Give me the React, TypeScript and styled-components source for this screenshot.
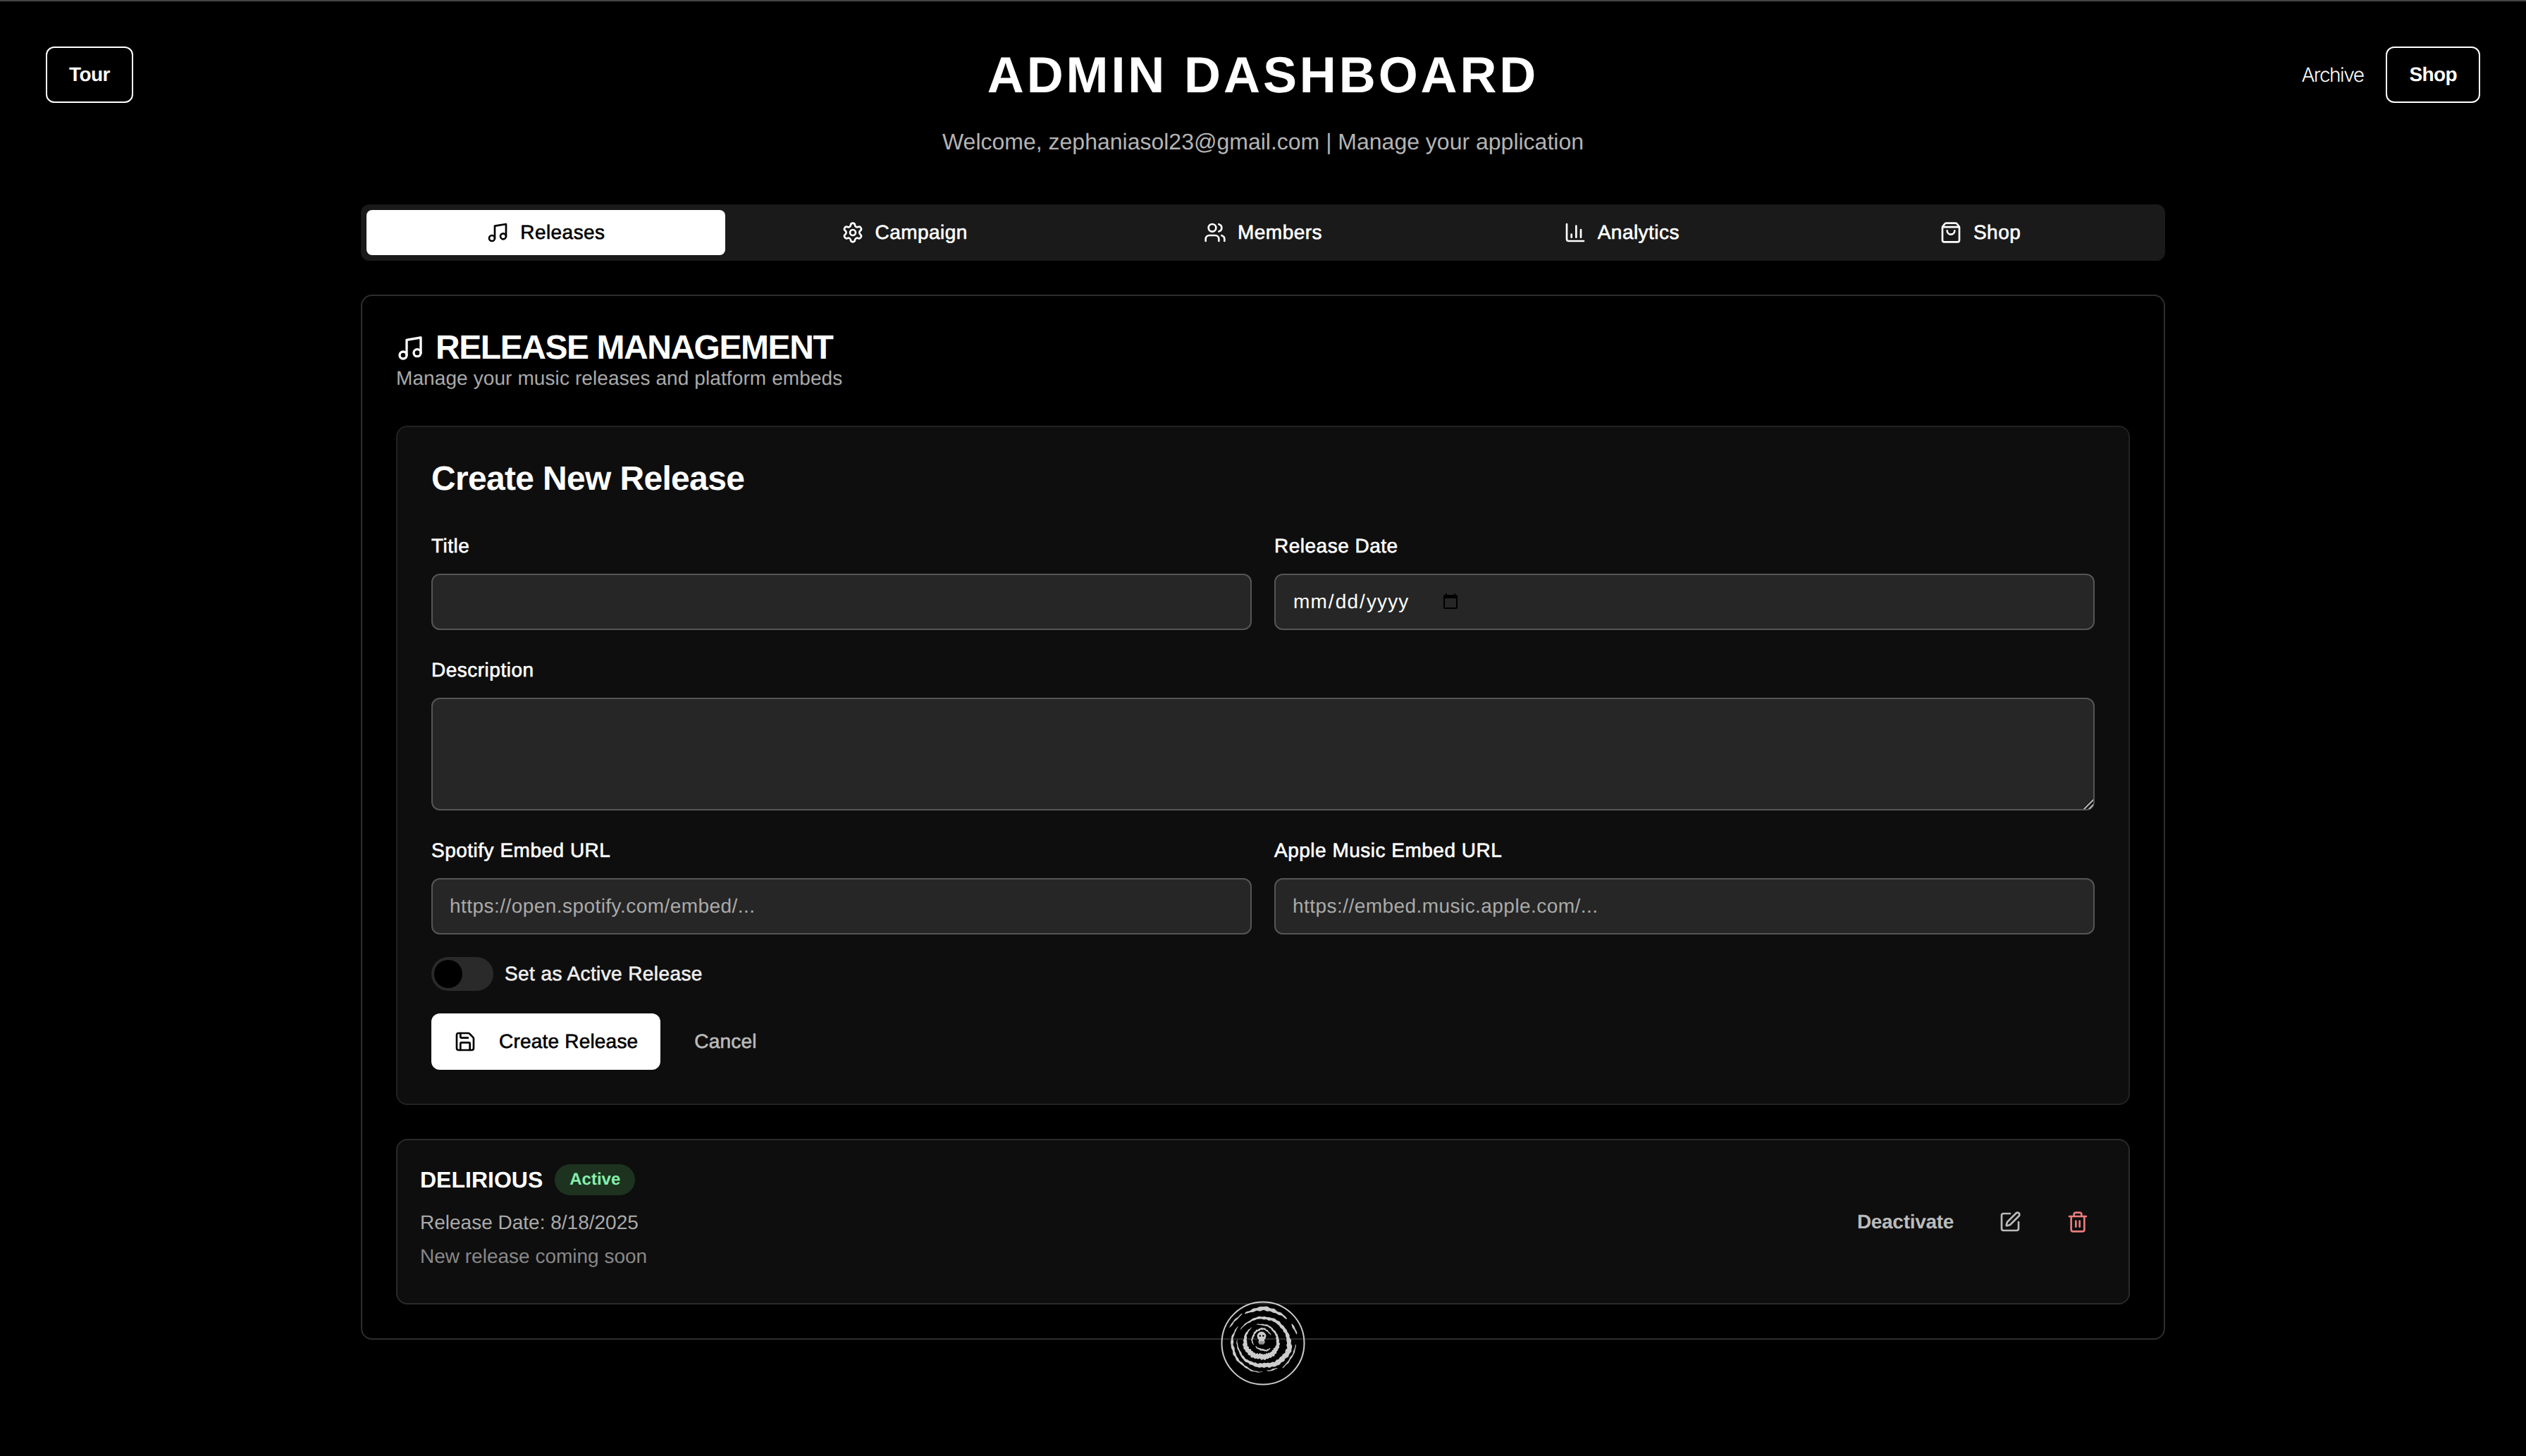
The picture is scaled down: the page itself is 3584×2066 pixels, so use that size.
import React from 'react';
import styled, { createGlobalStyle, css } from 'styled-components';
import { BarChart3, Music, Save, Settings, ShoppingBag, SquarePen, Trash2, Users } from 'lucide-react';

const GlobalStyle = createGlobalStyle`
    html, body {
        margin: 0;
        background: #000;
    }
    * {
        box-sizing: border-box;
    }
    body {
        font-family: "Liberation Sans", Arial, sans-serif;
        color: #fff;
        text-rendering: geometricPrecision;
    }
    button, input, textarea {
        font-family: inherit;
        text-rendering: geometricPrecision;
    }
`;

// Helvetica's medium weight has no Liberation counterpart, so thicken the regular cut.
const medium = css`
    -webkit-text-stroke: 0.6px currentColor;
    letter-spacing: 0.2px;
`;

const Page = styled.div`
    position: relative;
    min-height: 2066px;
    border-top: 2px solid #444;
`;

const TopBar = styled.header`
    display: grid;
    grid-template-columns: 1fr auto 1fr;
    align-items: start;
    padding: 64px 65px 0;
`;

const TopActions = styled.div<{ align: 'start' | 'end' }>`
    display: flex;
    align-items: center;
    gap: 32px;
    justify-content: flex-${({ align }) => align};
`;

const OutlineButton = styled.button`
    height: 80px;
    padding: 0 31px;
    background: #000;
    border: 2px solid #fff;
    border-radius: 12px;
    color: #fff;
    font-size: 28px;
    font-weight: 700;
    letter-spacing: -0.6px;
`;

const ArchiveLink = styled.a`
    font-family: Inter, sans-serif;
    font-size: 28px;
    font-weight: 300;
    letter-spacing: -1.5px;
    color: #fff;
`;

const Heading = styled.div`
    padding-top: 1px;
    text-align: center;
`;

const PageTitle = styled.h1`
    margin: 0;
    font-size: 72px;
    line-height: 80px;
    font-weight: 700;
    letter-spacing: 3.9px;
`;

const Welcome = styled.p`
    margin: 30px 0 0;
    font-size: 32px;
    line-height: 48px;
    color: #b4b4b4;
`;

const Main = styled.main`
    width: 2560px;
    margin: 65px auto 0;
`;

const TabBar = styled.nav`
    display: flex;
    padding: 8px;
    height: 80px;
    background: #1a1a1a;
    border-radius: 12px;
`;

const Tab = styled.button<{ active?: boolean }>`
    flex: 1;
    display: flex;
    align-items: center;
    justify-content: center;
    gap: 16px;
    border: 0;
    border-radius: 8px;
    font-size: 28px;
    ${medium}
    letter-spacing: 0.45px;
    background: ${({ active }) => (active ? '#fff' : 'transparent')};
    color: ${({ active }) => (active ? '#000' : '#fff')};

    svg {
        -webkit-text-stroke: 0;
    }
`;

const Card = styled.section`
    margin-top: 48px;
    padding: 48px;
    border: 2px solid #2e2e2e;
    border-radius: 16px;
`;

const CardTitle = styled.h2`
    display: flex;
    align-items: center;
    gap: 16px;
    margin: 0;
    font-size: 48px;
    line-height: 52px;
    font-weight: 700;
    letter-spacing: -1.45px;
`;

const CardSubtitle = styled.p`
    margin: 0;
    padding-top: 2px;
    font-size: 28px;
    line-height: 30px;
    color: #aaa;
    letter-spacing: 0.1px;
`;

const FormPanel = styled.form`
    margin-top: 52px;
    padding: 48px;
    background: #0e0e0e;
    border: 2px solid #222;
    border-radius: 16px;
`;

const FormTitle = styled.h3`
    margin: 0 0 48px;
    font-size: 48px;
    line-height: 52px;
    font-weight: 700;
    letter-spacing: -0.67px;
`;

const FieldRow = styled.div`
    display: grid;
    grid-template-columns: 1fr 1fr;
    gap: 32px;
    margin-bottom: 36px;
`;

const Field = styled.label`
    display: block;
`;

const FieldBlock = styled(Field)`
    margin-bottom: 36px;
`;

const LabelText = styled.span`
    display: block;
    margin-bottom: 18px;
    font-size: 28px;
    line-height: 42px;
    color: #fff;
    ${medium}
    letter-spacing: 0.5px;
`;

const control = css`
    display: block;
    width: 100%;
    padding: 0 24px;
    background: #262626;
    border: 2px solid #555;
    border-radius: 12px;
    color: #fff;
    font-size: 28px;
    outline: none;

    &::placeholder {
        color: #aaa;
        opacity: 1;
        letter-spacing: 0.45px;
    }
`;

const TextInput = styled.input`
    ${control}
    height: 80px;
`;

const DateInput = styled.input`
    ${control}
    height: 80px;

    &::-webkit-datetime-edit {
        flex: 0 0 auto;
        letter-spacing: 1.1px;
    }
    &::-webkit-calendar-picker-indicator {
        margin-left: 5px;
        width: 26px;
        height: 26px;
        padding: 0;
    }
`;

const TextArea = styled.textarea`
    ${control}
    height: 160px;
    padding: 16px 24px;
    resize: vertical;

    &::-webkit-resizer {
        background: linear-gradient(
            135deg,
            transparent 46%,
            #1c1c1c 46%,
            #1c1c1c 52%,
            #aaa 52%,
            #aaa 62%,
            #1c1c1c 62%,
            #1c1c1c 74%,
            #aaa 74%,
            #aaa 84%,
            transparent 84%
        );
    }
`;

const ToggleRow = styled.div`
    display: flex;
    align-items: center;
    gap: 16px;
    margin-top: -4px;
    font-size: 28px;
    color: #eee;
    ${medium}
    letter-spacing: 0.4px;
`;

const ToggleTrack = styled.button`
    width: 88px;
    height: 48px;
    padding: 4px;
    background: #2a2a2a;
    border: 0;
    border-radius: 24px;
`;

const ToggleThumb = styled.span`
    display: block;
    width: 40px;
    height: 40px;
    background: #000;
    border-radius: 50%;
`;

const FormActions = styled.div`
    display: flex;
    align-items: center;
    gap: 16px;
    margin-top: 32px;
`;

const PrimaryButton = styled.button`
    display: flex;
    align-items: center;
    gap: 32px;
    height: 80px;
    padding: 0 32px;
    background: #fff;
    border: 0;
    border-radius: 12px;
    color: #000;
    font-size: 28px;
    ${medium}

    svg {
        -webkit-text-stroke: 0;
    }
`;

const GhostButton = styled.button`
    height: 80px;
    padding: 0 32px;
    background: transparent;
    border: 0;
    color: #bbb;
    font-size: 28px;
    ${medium}
`;

const ReleaseCard = styled.article`
    display: flex;
    align-items: center;
    justify-content: space-between;
    margin-top: 48px;
    padding: 34px 32px;
    background: #0e0e0e;
    border: 2px solid #2a2a2a;
    border-radius: 16px;
`;

const ReleaseInfo = styled.div`
    padding-bottom: 12px;
`;

const ReleaseHead = styled.div`
    display: flex;
    align-items: center;
    gap: 17px;
    height: 44px;
`;

const ReleaseName = styled.h4`
    margin: 0;
    font-size: 32px;
    font-weight: 700;
`;

const Badge = styled.span`
    padding: 0 21px;
    height: 44px;
    line-height: 44px;
    background: #1d3320;
    border-radius: 22px;
    color: #86efac;
    font-size: 24px;
    font-weight: 700;
`;

const ReleaseMeta = styled.p<{ tone: string; gap: number }>`
    margin: ${({ gap }) => gap}px 0 0;
    font-size: 28px;
    line-height: 40px;
    color: ${({ tone }) => tone};
`;

const ReleaseActions = styled.div`
    display: flex;
    align-items: center;
    gap: 16px;
`;

const ActionButton = styled.button<{ tone: string }>`
    display: flex;
    align-items: center;
    height: 80px;
    padding: 0 24px;
    background: transparent;
    border: 0;
    color: ${({ tone }) => tone};
    font-size: 28px;
    font-weight: 700;
    letter-spacing: -0.3px;
`;

const LogoMark = styled.svg`
    position: fixed;
    left: 50%;
    bottom: 100px;
    width: 120px;
    height: 120px;
    margin-left: -60px;
`;

type Key = [angle: number, radius: number, thickness: number];

// Hand-cut look of the spiral: a polygon following angle/radius keys with a deterministic wobble.
function bandPath(keys: Key[], seed: number): string {
    const outer: string[] = [];
    const inner: string[] = [];
    const steps = 90;
    const first = keys[0][0];
    const last = keys[keys.length - 1][0];
    for (let i = 0; i <= steps; i += 1) {
        const t = i / steps;
        const angle = first + (last - first) * t;
        let k = 0;
        while (k < keys.length - 2 && angle > keys[k + 1][0]) {
            k += 1;
        }
        const [a0, r0, w0] = keys[k];
        const [a1, r1, w1] = keys[k + 1];
        const f = (angle - a0) / (a1 - a0);
        const rad = (angle * Math.PI) / 180;
        const noise = Math.sin(rad * 9 + seed) * 0.5 + Math.sin(rad * 23 + seed * 2) * 0.35;
        const radius = r0 + (r1 - r0) * f + noise * 0.7;
        const taper = Math.pow(Math.sin(Math.PI * t), 0.35);
        const width = (w0 + (w1 - w0) * f) * 1.35 * taper * (1 + Math.sin(rad * 31 + seed) * 0.2);
        const point = (r: number) =>
            `${(60 + r * Math.cos(rad)).toFixed(2)} ${(60 + r * Math.sin(rad)).toFixed(2)}`;
        outer.push(point(radius + width / 2));
        inner.unshift(point(radius - width / 2));
    }
    return `M${outer.join('L')}L${inner.join('L')}Z`;
}

const SPIRAL_BANDS: Key[][] = [
    [[-155, 52, 1.6], [-125, 51, 1.4]],
    [[-122, 49, 2.5], [-90, 49, 4.5], [-45, 48, 2.5]],
    [[-34, 49, 2.2], [-15, 49, 1.6]],
    [[2, 46, 1.5], [52, 44, 1.5]],
    [[60, 41, 1.5], [82, 39, 1.2]],
    [[90, 41, 1.2], [135, 42, 2], [180, 44, 3], [215, 43, 1.5]],
    [[-150, 37, 2], [-90, 36, 3.5], [-20, 36, 3.5], [10, 38, 5.5], [90, 31, 5], [150, 35, 3], [190, 37, 2]],
    [[-110, 28, 2.5], [-30, 22, 2.5], [40, 20, 5], [100, 19, 6], [170, 25, 6], [235, 28, 2]],
    [[170, 14, 1.8], [265, 21, 2], [315, 16, 1.6]],
];

const LOGO_JAW: Key[] = [[33, 13, 1.8], [100, 9, 2], [160, 11, 1.6]];

const Logo: React.FC = () => (
    <LogoMark viewBox="0 0 120 120" role="img" aria-label="Logo">
        <circle cx="60" cy="60" r="58.5" fill="none" stroke="#ccc" strokeWidth="2" />
        {SPIRAL_BANDS.map((keys, index) => (
            <path key={index} d={bandPath(keys, index * 1.7 + 1)} fill="#ccc" />
        ))}
        <path d={bandPath(LOGO_JAW, 4)} fill="#ccc" />
        <circle cx="58" cy="50" r="6.4" fill="#ccc" />
        <circle cx="55.8" cy="49.5" r="1.3" fill="#000" />
        <circle cx="60.4" cy="49.5" r="1.3" fill="#000" />
        <path d="M54.5 54h7l1 4.5-1.5 3h-6l-1.5-3z" fill="#ccc" />
        <path d="M56 57v4M58 57v4M60 57v4" stroke="#000" strokeWidth="0.6" />
    </LogoMark>
);

const TABS = [
    { label: 'Releases', icon: Music, active: true },
    { label: 'Campaign', icon: Settings },
    { label: 'Members', icon: Users },
    { label: 'Analytics', icon: BarChart3 },
    { label: 'Shop', icon: ShoppingBag },
];

const App: React.FC = () => (
    <Page>
        <GlobalStyle />
        <TopBar>
            <TopActions align="start">
                <OutlineButton>Tour</OutlineButton>
            </TopActions>
            <Heading>
                <PageTitle>ADMIN DASHBOARD</PageTitle>
                <Welcome>Welcome, zephaniasol23@gmail.com | Manage your application</Welcome>
            </Heading>
            <TopActions align="end">
                <ArchiveLink>Archive</ArchiveLink>
                <OutlineButton>Shop</OutlineButton>
            </TopActions>
        </TopBar>

        <Main>
            <TabBar>
                {TABS.map(({ label, icon: Icon, active }) => (
                    <Tab key={label} active={active}>
                        <Icon size={32} />
                        {label}
                    </Tab>
                ))}
            </TabBar>

            <Card>
                <CardTitle>
                    <Music size={40} />
                    RELEASE MANAGEMENT
                </CardTitle>
                <CardSubtitle>Manage your music releases and platform embeds</CardSubtitle>

                <FormPanel>
                    <FormTitle>Create New Release</FormTitle>
                    <FieldRow>
                        <Field>
                            <LabelText>Title</LabelText>
                            <TextInput type="text" />
                        </Field>
                        <Field>
                            <LabelText>Release Date</LabelText>
                            <DateInput type="date" />
                        </Field>
                    </FieldRow>
                    <FieldBlock>
                        <LabelText>Description</LabelText>
                        <TextArea />
                    </FieldBlock>
                    <FieldRow>
                        <Field>
                            <LabelText>Spotify Embed URL</LabelText>
                            <TextInput type="text" placeholder="https://open.spotify.com/embed/..." />
                        </Field>
                        <Field>
                            <LabelText>Apple Music Embed URL</LabelText>
                            <TextInput type="text" placeholder="https://embed.music.apple.com/..." />
                        </Field>
                    </FieldRow>
                    <ToggleRow>
                        <ToggleTrack type="button" role="switch" aria-checked="false">
                            <ToggleThumb />
                        </ToggleTrack>
                        Set as Active Release
                    </ToggleRow>
                    <FormActions>
                        <PrimaryButton type="button">
                            <Save size={32} />
                            Create Release
                        </PrimaryButton>
                        <GhostButton type="button">Cancel</GhostButton>
                    </FormActions>
                </FormPanel>

                <ReleaseCard>
                    <ReleaseInfo>
                        <ReleaseHead>
                            <ReleaseName>DELIRIOUS</ReleaseName>
                            <Badge>Active</Badge>
                        </ReleaseHead>
                        <ReleaseMeta tone="#aaa" gap={19}>Release Date: 8/18/2025</ReleaseMeta>
                        <ReleaseMeta tone="#888" gap={8}>New release coming soon</ReleaseMeta>
                    </ReleaseInfo>
                    <ReleaseActions>
                        <ActionButton tone="#bbb">Deactivate</ActionButton>
                        <ActionButton tone="#bbb" aria-label="Edit">
                            <SquarePen size={32} />
                        </ActionButton>
                        <ActionButton tone="#e87c7c" aria-label="Delete">
                            <Trash2 size={32} />
                        </ActionButton>
                    </ReleaseActions>
                </ReleaseCard>
            </Card>
        </Main>
        <Logo />
    </Page>
);

export default App;
